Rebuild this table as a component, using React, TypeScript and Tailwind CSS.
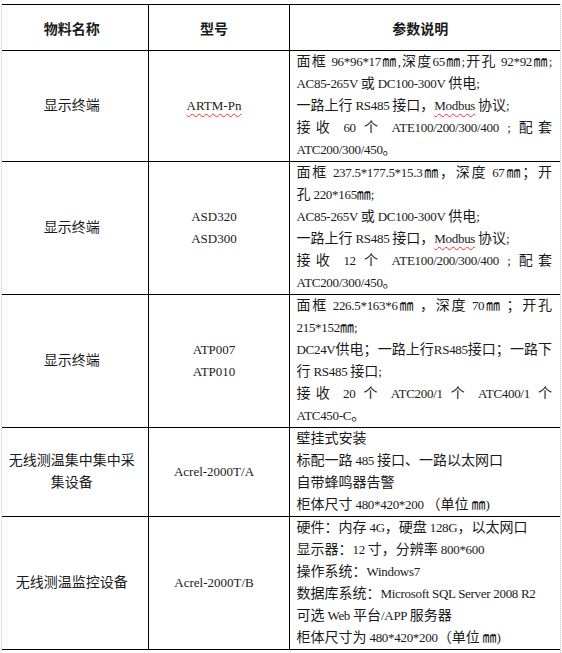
import React from "react";

// ASCII runs get a slightly smaller serif so lines keep the original breaks
const latin = /^[\x20-\x7E]+$/;
const T = (s: string) =>
	s.split(/([\x20-\x7E]+)/).map((part, i) =>
		latin.test(part) ? (
			<span key={i} className="text-[13px] tracking-[-0.3px]">
				{part}
			</span>
		) : (
			part
		),
	);

const Squiggle = ({ children }: { children: React.ReactNode }) => (
	<span className="underline decoration-wavy decoration-red-500 decoration-1 underline-offset-[3px]">
		{children}
	</span>
);

type Line = { text: React.ReactNode; justify?: boolean };
type Row = { name: string[]; model: React.ReactNode[]; spec: Line[] };

const modbusLine = (
	<>
		{T("一路上行 RS485 接口，")}
		<Squiggle>{T("Modbus")}</Squiggle>
		{T(" 协议;")}
	</>
);

const rows: Row[] = [
	{
		name: ["显示终端"],
		model: [<Squiggle key="a">ARTM-Pn</Squiggle>],
		spec: [
			{ text: T("面框 96*96*17㎜,深度65㎜;开孔 92*92㎜;"), justify: true },
			{ text: T("AC85-265V 或 DC100-300V 供电;") },
			{ text: modbusLine },
			{ text: T("接收 60 个 ATE100/200/300/400 ; 配套"), justify: true },
			{ text: T("ATC200/300/450。") },
		],
	},
	{
		name: ["显示终端"],
		model: ["ASD320", "ASD300"],
		spec: [
			{ text: T("面框 237.5*177.5*15.3㎜，深度 67㎜；开"), justify: true },
			{ text: T("孔 220*165㎜;") },
			{ text: T("AC85-265V 或 DC100-300V 供电;") },
			{ text: modbusLine },
			{ text: T("接收 12 个 ATE100/200/300/400 ; 配套"), justify: true },
			{ text: T("ATC200/300/450。") },
		],
	},
	{
		name: ["显示终端"],
		model: ["ATP007", "ATP010"],
		spec: [
			{ text: T("面框 226.5*163*6㎜ ，深度 70㎜ ；开孔"), justify: true },
			{ text: T("215*152㎜;") },
			{ text: T("DC24V供电；一路上行RS485接口；一路下"), justify: true },
			{ text: T("行 RS485 接口;") },
			{ text: T("接收 20 个 ATC200/1 个 ATC400/1 个"), justify: true },
			{ text: T("ATC450-C。") },
		],
	},
	{
		name: ["无线测温集中集中采", "集设备"],
		model: ["Acrel-2000T/A"],
		spec: [
			{ text: T("壁挂式安装") },
			{ text: T("标配一路 485 接口、一路以太网口") },
			{ text: T("自带蜂鸣器告警") },
			{ text: T("柜体尺寸 480*420*200 （单位 ㎜)") },
		],
	},
	{
		name: ["无线测温监控设备"],
		model: ["Acrel-2000T/B"],
		spec: [
			{ text: T("硬件：内存 4G，硬盘 128G，以太网口") },
			{ text: T("显示器：12 寸，分辨率 800*600") },
			{ text: T("操作系统：Windows7") },
			{ text: T("数据库系统：Microsoft SQL Server 2008 R2") },
			{ text: T("可选 Web 平台/APP 服务器") },
			{ text: T("柜体尺寸为 480*420*200（单位 ㎜)") },
		],
	},
];

export default function App() {
	return (
		<div className="h-[653px] w-[562px] overflow-hidden bg-white pt-[4px] [font-family:'Liberation_Serif','Noto_Sans_CJK_SC',serif] text-[14px] leading-[22px] text-[#1a1a1a]">
			<div className="mx-[1px] h-[649px] border-x border-dotted border-[#c8c8c8]">
				<table className="w-[558px] table-fixed border-collapse">
					<colgroup>
						<col className="w-[146px]" />
						<col className="w-[141px]" />
						<col className="w-[271px]" />
					</colgroup>
					<thead>
						<tr className="h-[46px] font-bold [font-family:'Noto_Sans_CJK_SC',sans-serif]">
							<th className="border-t border-b border-black pl-[4px] pr-[10px] text-center">
								物料名称
							</th>
							<th className="border border-black pl-[7px] pr-[16px] text-center">
								型号
							</th>
							<th className="border-t border-b border-black pl-[7px] pr-[16px] text-center">
								参数说明
							</th>
						</tr>
					</thead>
					<tbody>
						{rows.map((row, i) => (
							<tr key={i}>
								<td className="whitespace-nowrap border-b border-black pl-[4px] pr-[10px] text-center align-middle">
									{row.name.map((n) => (
										<div key={n}>{n}</div>
									))}
								</td>
								<td className="whitespace-nowrap border border-t-0 border-black pl-[7px] pr-[16px] text-center align-middle text-[13px]">
									{row.model.map((m, k) => (
										<div key={k}>{m}</div>
									))}
								</td>
								<td className="border-b border-black pl-[7px] pr-[8px] align-middle">
									{row.spec.map((line, k) => (
										<div
											key={k}
											className={
												line.justify
													? "text-justify [text-align-last:justify]"
													: "whitespace-nowrap text-left"
											}
										>
											{line.text}
										</div>
									))}
								</td>
							</tr>
						))}
					</tbody>
				</table>
			</div>
		</div>
	);
}
